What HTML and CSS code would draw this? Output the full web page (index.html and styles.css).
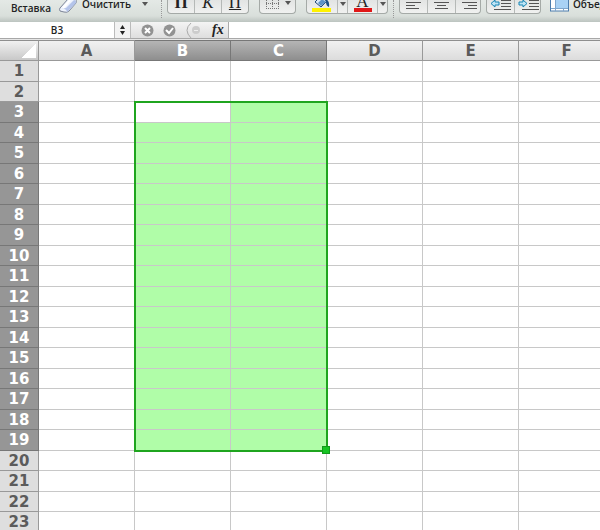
FILE: index.html
```
<!DOCTYPE html>
<html lang="ru">
<head>
    <meta charset="UTF-8">
    <meta name="viewport" content="width=device-width, initial-scale=1.0">
    <title>B3</title>
    <link rel="stylesheet" href="styles.css">
</head>
<body>
    <div class="toolbar">
        <button type="button" class="tool paste">Вставка</button>
        <button type="button" class="tool clear">
            <svg width="21" height="16" viewBox="0 0 21 16">
                <path d="M2 8 L10 -1 H17 Q19 0 18 3 L11 11 Q9 13 6 12 L2 11 Q1 9 2 8Z" fill="#eef3fd" stroke="#7c8496"/>
                <path d="M3 9 Q8 8 9 12 L18 3 Q18 0 16 0 L8 8Z" fill="#b4c4ea"/>
                <path d="M5 8 L12 0" stroke="#fff" stroke-width="2"/>
            </svg>
            <span>Очистить</span>
            <i class="arrow"></i>
        </button>
        <span class="dots dots-first"></span>
        <div class="group font-group">
            <button type="button" class="bold">П</button>
            <button type="button" class="italic">К</button>
            <button type="button" class="under">П</button>
        </div>
        <div class="group border-group">
            <button type="button" aria-label="Границы">
                <svg width="34" height="13" viewBox="0 0 34 13">
                    <path d="M5.500 0V9M11.500 0V9M17.500 0V9M5 3.500H18M5 8.500H18" stroke="#777" stroke-dasharray="1 1" fill="none"/>
                    <path d="M24 1h6l-3 4z" fill="#555"/>
                </svg>
            </button>
        </div>
        <div class="group color-group">
            <button type="button" class="color" aria-label="Заливка">
                <svg width="29" height="13" viewBox="0 0 29 13">
                    <path d="M7 2 L12 -3 L19 1 L13 7Z" fill="#d8e8f8" stroke="#234a78"/>
                    <path d="M10 3 L14 -1 L18 2 L13 6Z" fill="#5f93c8"/>
                    <path d="M17 -1 Q22 0 21 7 Q18 6 18 2Z" fill="#1d4f86"/>
                    <rect x="4" y="8" width="19" height="4" fill="#fff200"/>
                </svg>
            </button>
            <button type="button" class="drop" aria-label="Выбрать заливку"><i class="arrow"></i></button>
            <button type="button" class="color letter">А</button>
            <button type="button" class="drop" aria-label="Выбрать цвет"><i class="arrow"></i></button>
        </div>
        <span class="dots"></span>
        <div class="group align-group">
            <button type="button" aria-label="По левому краю">
                <svg width="27" height="13" viewBox="0 0 27 13"><path d="M6 -0.500H17M6 2.500H21M6 5.500H15M6 8.500H19" stroke="#555"/></svg>
            </button>
            <button type="button" aria-label="По центру">
                <svg width="27" height="13" viewBox="0 0 27 13"><path d="M9 -0.500H19M6 2.500H21M9 5.500H18M7 8.500H20" stroke="#555"/></svg>
            </button>
            <button type="button" aria-label="По правому краю">
                <svg width="27" height="13" viewBox="0 0 27 13"><path d="M10 -0.500H21M6 2.500H21M12 5.500H21M8 8.500H21" stroke="#555"/></svg>
            </button>
        </div>
        <div class="group indent-group">
            <button type="button" aria-label="Уменьшить отступ">
                <svg width="27" height="13" viewBox="0 0 27 13">
                    <path d="M14 0.500H24M14 3.500H24M14 6.500H24M7 9.500H24" stroke="#555"/>
                    <path d="M4 3.500L8 0V2H12V5H8V7Z" fill="#bfe4f5" stroke="#1785b5"/>
                </svg>
            </button>
            <button type="button" aria-label="Увеличить отступ">
                <svg width="27" height="13" viewBox="0 0 27 13">
                    <path d="M14 0.500H24M14 3.500H24M14 6.500H24M7 9.500H24" stroke="#555"/>
                    <path d="M12 3.500L8 0V2H4V5H8V7Z" fill="#bfe4f5" stroke="#1785b5"/>
                </svg>
            </button>
        </div>
        <button type="button" class="tool merge">
            <svg width="19" height="12" viewBox="0 0 19 12">
                <rect x="0.500" y="-4" width="18" height="15" fill="#fff" stroke="#4d7dad"/>
                <path d="M5 0H18V8H5Z" fill="#a9d2f5"/>
                <path d="M5.500 0V11M13.500 8V11M1 8.500H18" stroke="#7fa6cc"/>
            </svg>
            <span>Объединить</span>
        </button>
    </div>

    <div class="formula-bar">
        <input type="text" class="name-box" value="B3" aria-label="Имя">
        <button type="button" class="stepper" aria-label="Список имён">
            <svg width="7" height="10" viewBox="0 0 7 10"><path d="M1 4L3.500 0L6 4ZM1 6H6L3.500 10Z" fill="#222"/></svg>
        </button>
        <div class="formula-tools">
            <button type="button" aria-label="Отмена">
                <svg width="13" height="13" viewBox="0 0 13 13"><circle cx="6.500" cy="6.500" r="6" fill="#929292"/><path d="M4 4L9 9M9 4L4 9" stroke="#fff" stroke-width="2"/></svg>
            </button>
            <button type="button" aria-label="Ввод">
                <svg width="13" height="13" viewBox="0 0 13 13"><circle cx="6.500" cy="6.500" r="6" fill="#929292"/><path d="M3 6L6 9L10 4" stroke="#fff" stroke-width="2" fill="none"/></svg>
            </button>
            <svg width="18" height="15" viewBox="0 0 18 15"><path d="M6 0Q-2 7 6 15" fill="none" stroke="#aaa"/><circle cx="11" cy="7" r="4" fill="#ccc"/><path d="M9 7.500H13" stroke="#eee"/></svg>
            <button type="button" class="fx">fx</button>
        </div>
        <input type="text" class="formula" aria-label="Формула">
    </div>

    <div class="sheet">
        <table id="grid">
            <thead>
                <tr>
                    <th class="corner"></th>
                    <th>A</th>
                    <th class="active">B</th>
                    <th class="active">C</th>
                    <th>D</th>
                    <th>E</th>
                    <th>F</th>
                </tr>
            </thead>
            <tbody></tbody>
        </table>
        <div class="selection"></div>
    </div>

    <script>
        const body = document.querySelector('#grid tbody');

        for (let r = 1; r <= 23; r++) {
            const row = body.insertRow();
            const selected = r >= 3 && r <= 19;
            const head = document.createElement('th');
            head.textContent = r;
            if (selected) head.className = 'active';
            row.appendChild(head);

            for (let c = 0; c < 6; c++) {
                const cell = row.insertCell();
                if (selected && (c === 1 || c === 2)) {
                    cell.className = r === 3 && c === 1 ? 'current' : 'selected';
                }
            }
        }
    </script>
</body>
</html>
```

FILE: styles.css
```
* {
    box-sizing: border-box;
}
body {
    margin: 0;
    background: #fff;
    font-family: "Open Sans", "Noto Sans", sans-serif;
    font-size: 10px;
    font-weight: 600;
    color: #222;
    overflow: hidden;
}
button, input {
    font: inherit;
    color: inherit;
    border: 0;
    padding: 0;
    margin: 0;
    background: none;
    border-radius: 0;
}
svg {
    display: block;
    flex: none;
}

/* toolbar */
.toolbar {
    display: flex;
    align-items: flex-start;
    height: 22px;
    padding-left: 11px;
    background: linear-gradient(#e4e9e6, #d9dfdb 16px, #bcc4c0);
    overflow: hidden;
    white-space: nowrap;
}
.tool {
    display: flex;
    align-items: flex-start;
    line-height: 16px;
    flex: none;
}
.paste {
    width: 47px;
}
.clear {
    width: 102px;
}
.clear span {
    width: 60px;
    margin-left: 3px;
    line-height: 9px;
    text-align: left;
}
.arrow {
    border: 3px solid transparent;
    border-top: 4px solid #555;
    border-bottom: 0;
    margin-top: 2px;
}
.dots {
    width: 1px;
    height: 18px;
    border-left: 1px dotted #999;
    margin: 0 5px;
}
.dots-first {
    margin: 0 5px 0 1px;
}
.group {
    display: flex;
    flex: none;
    height: 14px;
    border: 1px solid #a5aaa7;
    border-top: 0;
    border-radius: 0 0 4px 4px;
    background: linear-gradient(#e2e4e3, #f0f1f0);
    overflow: hidden;
}
.group button {
    height: 13px;
    flex: 1;
    border-left: 1px solid #b5b9b7;
    display: flex;
    justify-content: center;
}
.group button:first-child {
    border-left: 0;
}
.font-group {
    width: 82px;
    margin-right: 10px;
    font-family: "Liberation Serif", serif;
    font-size: 17px;
    font-weight: normal;
    line-height: 5px;
}
.group .bold {
    font-weight: bold;
}
.group .italic {
    font-style: italic;
}
.group .under {
    text-decoration: underline;
}
.border-group {
    width: 37px;
    margin-right: 10px;
}
.color-group {
    width: 82px;
}
.group .color {
    flex: none;
    width: 30px;
}
.group .drop {
    flex: none;
    width: 10px;
}
.group .letter {
    font-family: "Liberation Serif", serif;
    font-size: 17px;
    font-weight: normal;
    line-height: 3px;
    background: linear-gradient(#e01818, #e01818) 6px 8px / 18px 4px no-repeat;
}
.align-group {
    width: 82px;
    margin-right: 5px;
}
.indent-group {
    width: 55px;
    margin-right: 9px;
}
.merge span {
    margin-left: 4px;
    line-height: 9px;
}

/* formula bar */
.formula-bar {
    display: flex;
    height: 16px;
    background: #fff;
}
.name-box {
    width: 114px;
    height: 15px;
    text-align: center;
    flex: none;
}
.stepper {
    width: 17px;
    flex: none;
    display: flex;
    align-items: center;
    justify-content: center;
    border-left: 1px solid #bbb;
    border-right: 1px solid #bbb;
    background: #f2f2f2;
}
.formula-tools {
    display: flex;
    align-items: center;
    gap: 9px;
    width: 98px;
    padding-left: 10px;
    flex: none;
    border-right: 1px solid #aaa;
    background: linear-gradient(#f4f4f4, #dedede);
}
.fx {
    font-family: "Liberation Serif", serif;
    font-size: 14px;
    font-style: italic;
    font-weight: bold;
    line-height: 14px;
}
.formula {
    flex: 1;
    min-width: 0;
}

/* sheet */
.sheet {
    position: relative;
    overflow: hidden;
    border-top: 1px solid #a8a8a8;
}
table {
    width: 615px;
    table-layout: fixed;
    border-collapse: separate;
    border-spacing: 0;
    border-top: 1px solid #e6e6e6;
}
th, td {
    padding: 0;
    height: 20px;
    border-right: 1px solid #c8c8c8;
    border-bottom: 1px solid #c8c8c8;
}
th {
    font-family: "DejaVu Sans", sans-serif;
    font-size: 15px;
    line-height: 18px;
    font-weight: bold;
    color: #5b5b5b;
    background: #dedede;
    border-color: #999;
}
tbody tr:nth-child(odd) > * {
    height: 21px;
}
thead th {
    background: linear-gradient(#f1f1f1, #dcdcdc);
    border-top: 1px solid #8f8f8f;
    height: 21px;
}
thead .corner {
    width: 39px;
    background: linear-gradient(135deg, transparent 50%, #fff 50%) 21px 3px / 15px 14px no-repeat, linear-gradient(#f1f1f1, #c8c8c8);
}
th.active {
    color: #fff;
    background: #969696;
    border-color: #777;
}
thead th.active {
    background: linear-gradient(#b5b5b5, #8e8e8e);
}
.selected {
    background: #b0fda8;
}
.selection {
    position: absolute;
    left: 134px;
    top: 62px;
    width: 194px;
    height: 351px;
    border: 2px solid #1fa51f;
}
.selection::after {
    content: "";
    position: absolute;
    right: -4px;
    bottom: -4px;
    width: 6px;
    height: 6px;
    background: #17c423;
    border: 1px solid #139a1c;
}
```
